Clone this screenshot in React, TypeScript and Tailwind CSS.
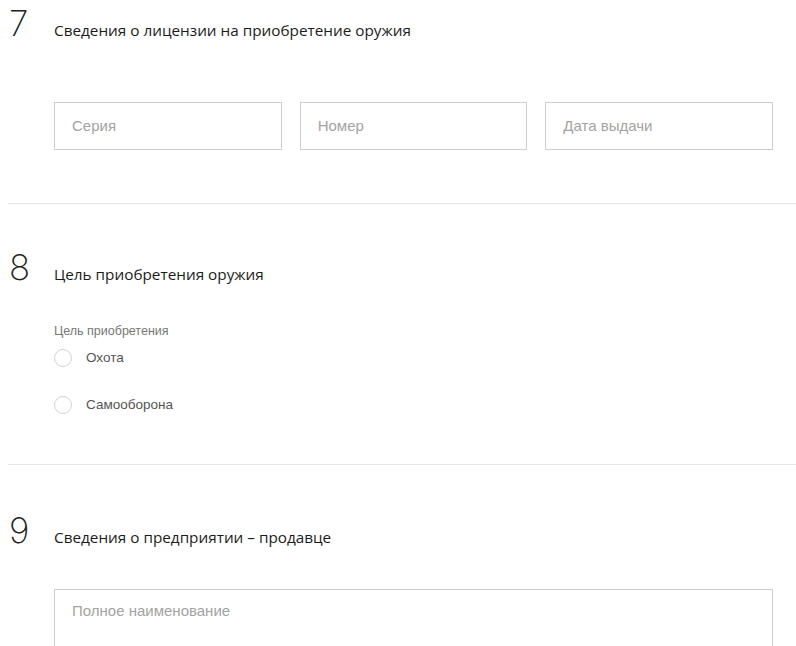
const heading = "font-['Open_Sans',sans-serif] text-[15.3px] text-[#1b1b1b]";
const field =
  "h-12 w-full border border-[#cfcfcf] bg-white px-[17px] font-['Liberation_Sans',Arial,sans-serif] text-[15px] text-[#333] outline-none placeholder:text-[#a3a3a3]";

function SectionHead({ num, title }: { num: string; title: string }) {
  return (
    <div className="flex items-baseline">
      <span className="w-[46px] pl-[1px] font-['Inter',sans-serif] text-[35px] font-extralight leading-none text-[#222]">
        {num}
      </span>
      <h2 className={heading}>{title}</h2>
    </div>
  );
}

function Radio({ label }: { label: string }) {
  return (
    <label className="flex items-center gap-[14px]">
      <span className="h-[18px] w-[18px] rounded-full border border-[#d4d4d4] bg-white" />
      <span className="font-['Liberation_Sans',Arial,sans-serif] text-[13.5px] text-[#555]">{label}</span>
    </label>
  );
}

export default function App() {
  return (
    <div className="min-h-screen overflow-hidden bg-white pl-2">
      {/* 7 */}
      <section className="border-b border-[#e6e6e6] pt-[6px] pb-[53px] pr-[23px]">
        <SectionHead num="7" title="Сведения о лицензии на приобретение оружия" />
        <div className="mt-[60px] grid grid-cols-3 gap-[18px] pl-[46px]">
          <input className={field} placeholder="Серия" readOnly />
          <input className={field} placeholder="Номер" readOnly />
          <input className={field} placeholder="Дата выдачи" readOnly />
        </div>
      </section>

      {/* 8 */}
      <section className="border-b border-[#e6e6e6] pt-[46px] pb-[49px] pr-[23px]">
        <SectionHead num="8" title="Цель приобретения оружия" />
        <div className="mt-[36px] pl-[46px]">
          <div className="font-['Liberation_Sans',Arial,sans-serif] text-[12.5px] text-[#777]">
            Цель приобретения
          </div>
          <div className="mt-[7px] flex flex-col gap-[27px]">
            <Radio label="Охота" />
            <Radio label="Самооборона" />
          </div>
        </div>
      </section>

      {/* 9 */}
      <section className="pt-[48px] pr-[23px]">
        <SectionHead num="9" title="Сведения о предприятии – продавце" />
        <div className="mt-[40px] pl-[46px]">
          <textarea
            className="block h-[110px] w-full resize-none border border-[#cfcfcf] bg-white px-[17px] pt-[10px] font-['Liberation_Sans',Arial,sans-serif] text-[15px] text-[#333] outline-none placeholder:text-[#a3a3a3]"
            placeholder="Полное наименование"
            readOnly
          />
        </div>
      </section>
    </div>
  );
}
